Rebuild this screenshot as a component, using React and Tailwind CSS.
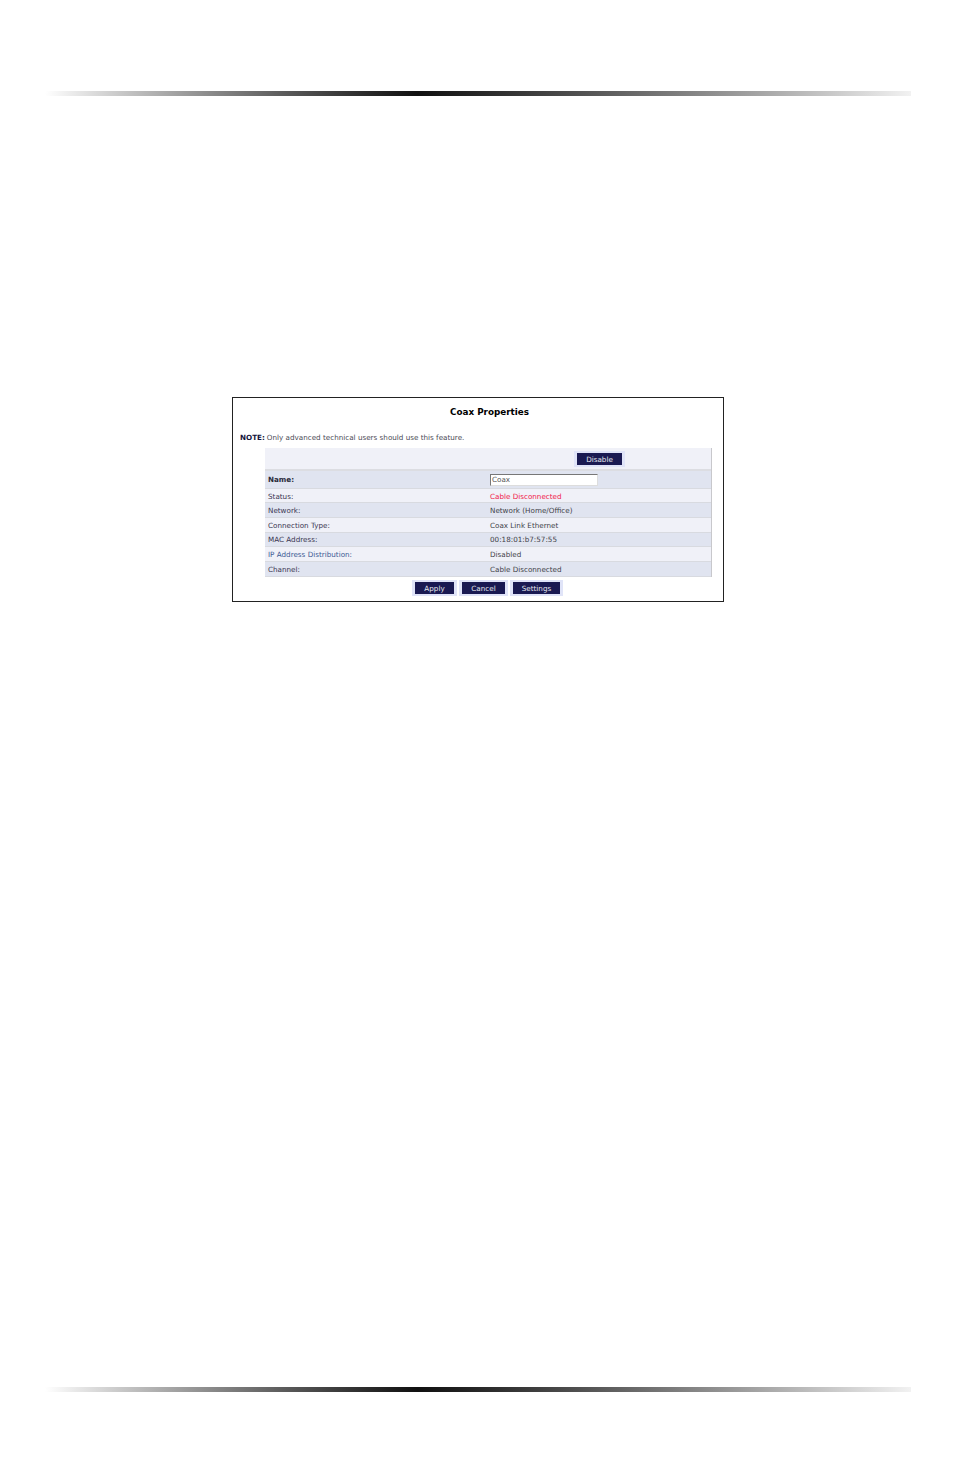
function Row({ label, value, bg, h, pad = "pt-px", labelClass = "text-[#3a3550]", valueClass = "text-[#3f3f48]", children }) {
  return (
    <div className={`flex items-center border-b border-[#d8dae0] ${pad} ${bg} ${h}`}>
      <div className={`w-[225px] pl-[3px] ${labelClass}`}>{label}</div>
      <div className={`flex-1 ${valueClass}`}>{children || value}</div>
    </div>
  );
}
function Btn({ children, w }) {
  return (
    <div className={`border-y-2 border-x-[3px] border-[#e0e4f8] bg-[#1a1a52] text-[#e8e8f0] h-[16px] pt-px flex items-center justify-center ${w}`}>
      {children}
    </div>
  );
}
function Bar() {
  return <div className="h-[5px] mx-[45px] w-[866px] bg-gradient-to-r from-[#ffffff] via-[#111111] via-[43%] to-[#f2f2f2]" />;
}
export default function App() {
  return (
    <div className="w-[955px] h-[1474px] bg-white flex flex-col font-['DejaVu_Sans',sans-serif] text-[7.2px] leading-none">
      <div className="pt-[91px]"><Bar /></div>
      <div className="mt-[301px] ml-[232px] w-[492px] h-[205px] border border-[#222] flex flex-col">
        <div className="mt-[8px] pl-[23px] text-center text-[8.8px] font-bold text-black h-[12px] flex items-center justify-center">Coax Properties</div>
        <div className="mt-[16px] pl-[7px] h-[8px] flex items-center text-[#4a4a55]">
          <span className="font-bold text-[#14143c] mr-[2px]">NOTE:</span>Only advanced technical users should use this feature.
        </div>
        <div className="mt-[6px] ml-[32px] w-[447px] border-r border-[#c8c8cc] flex flex-col">
          <div className="h-[23px] pt-[3px] bg-[#f0f1f8] border-b-2 border-[#dcdde2] flex items-start pl-[309px]">
            <Btn w="w-[51px]">Disable</Btn>
          </div>
          <Row bg="bg-[#e0e4f0]" h="h-[18px]" pad="pt-0" label={<span className="font-bold text-[#2a2a3a]">Name:</span>}>
            <div className="w-[108px] h-[12px] bg-white border border-[#777] border-b-[#ddd] border-r-[#ddd] pl-[1px] flex items-center text-[#555]">Coax</div>
          </Row>
          <Row bg="bg-[#f0f1f8]" h="h-[14px]" pad="pt-[2px]" label="Status:" valueClass="text-[#f0204a]" value="Cable Disconnected" />
          <Row bg="bg-[#e0e4f0]" h="h-[15px]" label="Network:" value="Network (Home/Office)" />
          <Row bg="bg-[#f0f1f8]" h="h-[14.5px]" label="Connection Type:" value="Coax Link Ethernet" />
          <Row bg="bg-[#e0e4f0]" h="h-[14.5px]" label="MAC Address:" value="00:18:01:b7:57:55" />
          <Row bg="bg-[#f0f1f8]" h="h-[15px]" label="IP Address Distribution:" labelClass="text-[#3c5a94]" value="Disabled" />
          <Row bg="bg-[#e0e4f0]" h="h-[15px]" label="Channel:" value="Cable Disconnected" />
        </div>
        <div className="mt-[3px] flex gap-[2px] pl-[179px]">
          <Btn w="w-[45px]">Apply</Btn>
          <Btn w="w-[49px]">Cancel</Btn>
          <Btn w="w-[53px]">Settings</Btn>
        </div>
      </div>
      <div className="mt-[785px]"><Bar /></div>
    </div>
  );
}
